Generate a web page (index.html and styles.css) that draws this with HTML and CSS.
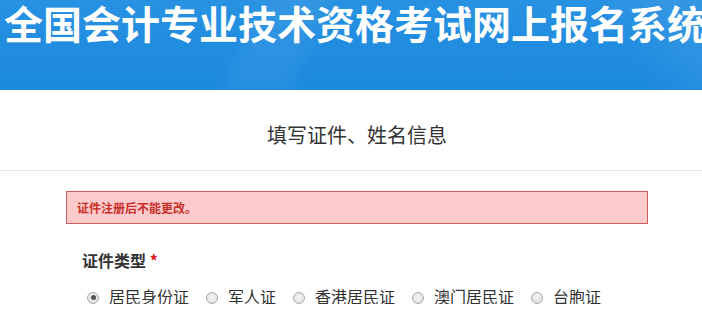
FILE: index.html
```html
<!DOCTYPE html>
<html lang="zh-CN">
<head>
<meta charset="utf-8">
<title>全国会计专业技术资格考试网上报名系统</title>
<link rel="stylesheet" href="styles.css">
</head>
<body>
<header class="banner">
  <h1 class="banner-title">全国会计专业技术资格考试网上报名系统</h1>
</header>
<main class="page">
  <div class="page-head">
    <h2 class="page-title">填写证件、姓名信息</h2>
  </div>
  <section class="form">
    <div class="alert">证件注册后不能更改。</div>
    <div class="field-label">证件类型 <span class="req">*</span></div>
    <div class="radio-row">
      <label class="radio-item"><span class="radio checked"></span><span class="radio-text">居民身份证</span></label>
      <label class="radio-item"><span class="radio"></span><span class="radio-text">军人证</span></label>
      <label class="radio-item"><span class="radio"></span><span class="radio-text">香港居民证</span></label>
      <label class="radio-item"><span class="radio"></span><span class="radio-text">澳门居民证</span></label>
      <label class="radio-item"><span class="radio"></span><span class="radio-text">台胞证</span></label>
    </div>
  </section>
</main>
</body>
</html>
```
FILE: styles.css
```css
* { box-sizing: border-box; }
html, body { margin: 0; padding: 0; background: #fff; }
body {
  font-family: "Noto Sans CJK SC", "Microsoft YaHei", "Liberation Sans", sans-serif;
  color: #333;
  overflow: hidden;
}
.banner {
  height: 90px;
  padding: 3px 0 0 4px;
  overflow: hidden;
  background:
    linear-gradient(115deg, rgba(255,255,255,0) 0, rgba(255,255,255,0) 230px, rgba(255,255,255,0.05) 250px, rgba(255,255,255,0.05) 290px, rgba(255,255,255,0) 310px, rgba(255,255,255,0) 100%),
    linear-gradient(60deg, rgba(255,255,255,0) 0, rgba(255,255,255,0) 560px, rgba(255,255,255,0.06) 620px, rgba(255,255,255,0.04) 100%),
    linear-gradient(180deg, #2891e2 0%, #1b89de 100%);
}
.banner-title {
  margin: 0;
  font-size: 39px;
  line-height: 39px;
  font-weight: 700;
  color: #fff;
  white-space: nowrap;
  letter-spacing: 0;
}
.page-head {
  padding: 35px 0 25px 12px;
  border-bottom: 1px solid #e8e8e8;
  text-align: center;
}
.page-title {
  margin: 0;
  font-size: 20px;
  line-height: 20px;
  font-weight: 400;
  color: #333;
}
.form {
  padding: 20px 0 0 66px;
}
.alert {
  width: 582px;
  height: 33px;
  padding: 0 10px;
  border: 1px solid #c9605d;
  background: #fccaca;
  color: #c7302b;
  font-size: 12px;
  line-height: 31px;
  font-weight: 700;
}
.field-label {
  margin: 28px 0 0 16px;
  font-size: 16px;
  line-height: 16px;
  font-weight: 700;
  color: #333;
}
.req { color: #e0201c; }
.radio-row {
  display: flex;
  margin: 20px 0 0 21px;
  font-size: 16px;
  line-height: 16px;
}
.radio-item {
  display: flex;
  align-items: center;
  margin-right: 17px;
}
.radio {
  width: 12px;
  height: 12px;
  margin: 3px 10px 0 0;
  border-radius: 50%;
  border: 1px solid #a9a9a9;
  background: radial-gradient(circle at 50% 40%, #f4f4f4 0%, #dcdcdc 100%);
  display: flex;
  align-items: center;
  justify-content: center;
}
.radio.checked::after {
  content: "";
  width: 5px;
  height: 5px;
  border-radius: 50%;
  background: #555;
}
.radio-text { color: #333; }
```
